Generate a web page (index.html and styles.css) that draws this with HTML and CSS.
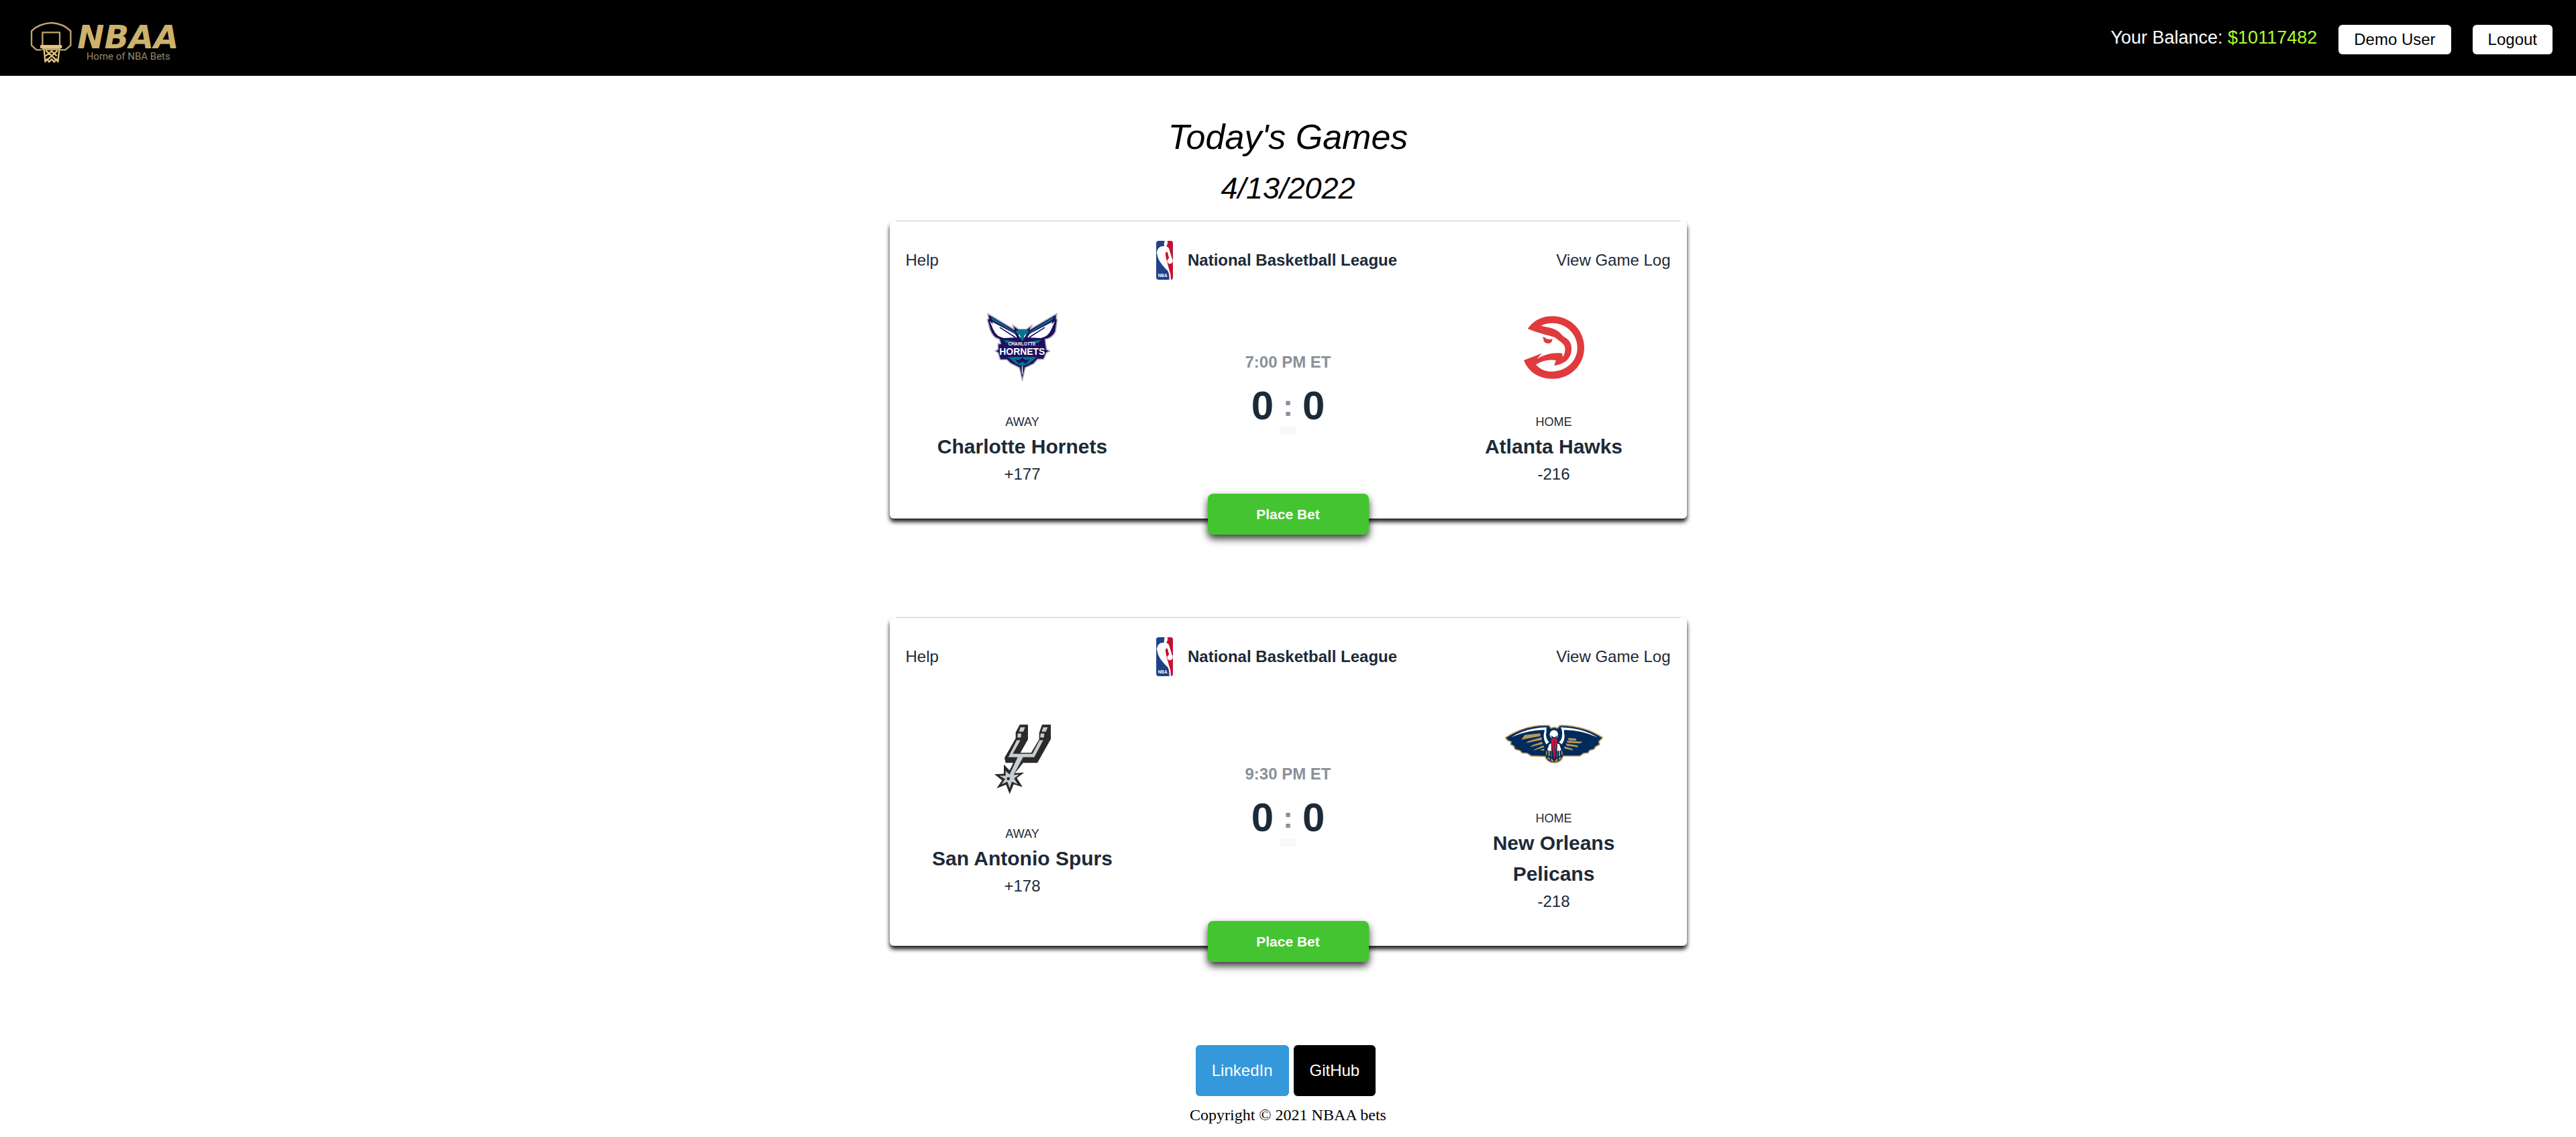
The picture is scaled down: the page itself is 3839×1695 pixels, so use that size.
FILE: index.html
```html
<!DOCTYPE html>
<html lang="en">
<head>
<meta charset="utf-8">
<title>NBAA</title>
<link rel="stylesheet" href="styles.css">
</head>
<body>
<header class="nav">
  <a href="#" class="brand" aria-label="NBAA home">
    <svg class="brand-logo" viewBox="0 0 960 339">
      <g fill="none" stroke="#c0a56b" stroke-width="7" stroke-linejoin="round">
        <path d="M185 223h-22l-22-20v-64q30-32 88-37 56 4 87 37v64l-24 20h-24"/>
        <rect x="190" y="145" width="77" height="60"/>
        <path d="M197 222l5 54 9-12 8 13 12-12 12 12 8-13 8 12 6-54M205 226l46 42M257 226l-46 42M228 226l26 24M234 226l-30 24" stroke="#e2c47f"/>
      </g>
      <rect x="180" y="201" width="97" height="15" rx="4" fill="#e2c47f"/>
      <rect x="188" y="216" width="82" height="9" fill="#c0a56b"/>
      <text x="346" y="217" class="brand-name">NBAA</text>
      <text x="386" y="267" class="brand-tag">Home of NBA Bets</text>
    </svg>
  </a>
  <div class="account">
    <p class="balance">Your Balance: <span class="amount">$10117482</span></p>
    <button class="nav-button" type="button">Demo User</button>
    <button class="nav-button" type="button">Logout</button>
  </div>
</header>

<main class="games">
  <h1 class="title">Today's Games</h1>
  <h2 class="date">4/13/2022</h2>

  <article class="card">
    <div class="card-header">
      <a href="#" class="card-link">Help</a>
      <div class="league">
        <svg class="league-logo" viewBox="70 58 74 173">
          <rect x="70" y="58" width="74" height="173" rx="11" fill="#1d428a"/>
          <path d="M116 58h17q11 0 11 11v151q0 11-11 11h-3l-20-90z" fill="#c8102e"/>
          <path d="M108 58H119Q124 66 118 76L116 84Q127 86 129 100L136 122 139 134Q145 140 143 152 138 162 127 160 118 156 119 144L127 134 120 108Q112 104 111 118L115 140Q122 165 127 184 136 205 135 231H128Q129 205 122 192 90 162 79 136 74 124 75 118L72 114Q74 92 88 84 98 82 106 80 103 70 108 58Z" fill="#fff"/>
          <text x="78" y="219" class="nba-word">NBA</text>
        </svg>
        National Basketball League
      </div>
      <a href="#" class="card-link end">View Game Log</a>
    </div>
    <div class="card-body">
      <section class="team">
        <div class="team-logo">
          <svg width="107" height="103" viewBox="88 75 322 309">
            <path d="M94 79L212 150 206 130 232 149H268L293 130 284 150 404 79 401 102 406 106 398 160Q384 190 352 194L354 214 358 240 373 247 358 254 345 284H318L300 304 262 322 249 380 236 322 196 302 180 286H150L140 254 127 247 140 240V214H152L146 194Q118 190 104 150L92 106 98 102Z" fill="#1d1160" stroke="#b4b3b8" stroke-width="5" stroke-linejoin="round"/>
            <path d="M108 94L210 158 218 168 116 108ZM390 94L288 158 280 168 382 108Z" fill="#00788c"/>
            <path d="M103 113L118 128 114 116 216 170 226 186 166 189Q132 182 118 148ZM395 113L380 128 384 116 282 170 272 186 332 189Q366 182 380 148Z" fill="#fff"/>
            <path d="M148 141l70 45M350 141l-70 45" stroke="#1d1160" stroke-width="5"/>
            <path d="M218 158q32-14 62 0l-18 22-13 24-14-24zM166 197l52 8 6 6H178zM332 197l-52 8-6 6h46zM184 274h130l-36 30-29 12-28-12z" fill="#00788c"/>
            <path d="M214 282l20 6 15-12 16 12 20-6-20 22-16-10-16 10z" fill="#1d1160"/>
            <path d="M234 172l6 14M264 172l-6 14M249 316v34" stroke="#fff" stroke-width="4"/>
            <text x="186" y="223" class="hornets-city">CHARLOTTE</text>
            <text x="146" y="264" class="hornets-word">HORNETS</text>
          </svg>
        </div>
        <p class="side">Away</p>
        <p class="name">Charlotte Hornets</p>
        <p class="odds">+177</p>
      </section>
      <section class="score">
        <p class="time">7:00 PM ET</p>
        <p class="points">0<span class="colon">:</span>0</p>
        <span class="badge"></span>
        <button class="bet" type="button">Place Bet</button>
      </section>
      <section class="team">
        <div class="team-logo">
          <svg width="90" height="94" viewBox="65 66 271 282">
            <path d="M82 123C106 86 148 66 193 66C272 66 336 128 336 207C336 286 274 348 193 348C133 348 84 316 65 264L146 233L123 258C160 236 200 228 237 233L239 249Q250 238 250 214C250 190 228 182 205 162C170 150 120 140 82 123ZM142 110L188 120C222 130 234 150 244 159C268 170 280 190 279 216C277 262 240 284 201 288L209 265C178 258 142 270 119 284C138 306 162 316 194 315C256 312 305 270 305 208C305 146 252 96 192 98Q162 98 142 110Z" fill="#e03a3e" fill-rule="evenodd"/>
            <path d="M145 162q14-6 21 6 12 4 27 1-1 20-20 20-22-2-20-24z" fill="#e03a3e"/>
          </svg>
        </div>
        <p class="side">Home</p>
        <p class="name">Atlanta Hawks</p>
        <p class="odds">-216</p>
      </section>
    </div>
  </article>

  <article class="card">
    <div class="card-header">
      <a href="#" class="card-link">Help</a>
      <div class="league">
        <svg class="league-logo" viewBox="70 58 74 173">
          <rect x="70" y="58" width="74" height="173" rx="11" fill="#1d428a"/>
          <path d="M116 58h17q11 0 11 11v151q0 11-11 11h-3l-20-90z" fill="#c8102e"/>
          <path d="M108 58H119Q124 66 118 76L116 84Q127 86 129 100L136 122 139 134Q145 140 143 152 138 162 127 160 118 156 119 144L127 134 120 108Q112 104 111 118L115 140Q122 165 127 184 136 205 135 231H128Q129 205 122 192 90 162 79 136 74 124 75 118L72 114Q74 92 88 84 98 82 106 80 103 70 108 58Z" fill="#fff"/>
          <text x="78" y="219" class="nba-word">NBA</text>
        </svg>
        National Basketball League
      </div>
      <a href="#" class="card-link end">View Game Log</a>
    </div>
    <div class="card-body">
      <section class="team">
        <div class="team-logo">
          <svg width="84" height="104" viewBox="98 57 252 311">
            <path d="M211 57H248V123L214 183H262L298 123V94L311 57H350V122L290 228H226L190 274 231 272 198 296 224 336 184 324 166 368 150 326 108 342 132 306 98 279 140 277V236L166 262 182 228H148L143 206 193 118V92Z" fill="#2d2926"/>
            <path d="M214 69h21l-8 20h-19zM316 69h20l-8 20h-19zM202 97h16l-2 18h-15zM304 97h17l-2 18h-16zM198 127H214L180 188H268L300 127H316L276 203H226L184 282 208 280 186 298 202 324 176 312 166 342 156 312 130 324 146 300 120 286 148 286V264L166 280 202 203H160Z" fill="#c4ced4"/>
            <circle cx="160" cy="299" r="7" fill="#2d2926"/>
          </svg>
        </div>
        <p class="side">Away</p>
        <p class="name">San Antonio Spurs</p>
        <p class="odds">+178</p>
      </section>
      <section class="score">
        <p class="time">9:30 PM ET</p>
        <p class="points">0<span class="colon">:</span>0</p>
        <span class="badge"></span>
        <button class="bet" type="button">Place Bet</button>
      </section>
      <section class="team">
        <div class="team-logo">
          <svg width="146" height="58" viewBox="65 62 438 172">
            <path d="M67 120Q160 60 262 66L270 78Q285 70 300 78L310 65Q420 66 501 120L484 138 488 150 470 160 462 172 444 176 436 188 416 190 400 202 324 202Q316 232 285 232Q254 232 244 204L182 202 164 190 140 188 132 178 110 172 104 158 90 150 92 138 76 132z" fill="#002b5c" stroke="#b9975b" stroke-width="5" stroke-linejoin="round"/>
            <path d="M92 119Q160 76 250 74Q250 96 248 108Q250 128 262 140L250 150Q236 130 238 106L242 86Q170 84 92 119zM479 119Q410 76 314 74Q322 90 320 108Q320 128 306 140L318 150Q334 130 330 106L328 86Q400 84 479 119z" fill="#fff"/>
            <path d="M152 108l70-7 2 12-86 16zM168 136l60-18 2 12-72 14zM186 154l44-16 4 10-58 14zM202 170l34-15 4 8-50 15zM220 176l20-6v9zM346 122l36 2 2 9-34-1zM340 134l72 4-12 8-56-3zM334 146l54 9 4 8-50-7zM330 159l34 10 6 8-40-9z" fill="#b9975b"/>
            <circle cx="285" cy="190" r="37" fill="#b9975b"/>
            <path d="M252 170q10 24-2 38M318 170q-10 24 2 38M250 200q34 22 72 0M268 156v66M302 156v66" fill="none" stroke="#002b5c" stroke-width="6"/>
            <path d="M262 150l12-6v36l-20-4zM308 150l-12-6v36l20-4z" fill="#fff"/>
            <path d="M270 124h30l-4 90-11 14-11-14z" fill="#002b5c"/>
            <path d="M284 86q17 2 18 20l-3 14q-15-6-30 0l-5-13q2-19 20-21z" fill="#fff"/>
            <path d="M270 112l10 6M299 112l-9 6" stroke="#002b5c" stroke-width="4"/>
            <path d="M270 128l14-8 15 8-6 46-8 44-8-44z" fill="#d31235"/>
            <path d="M285 132v60" stroke="#002b5c" stroke-width="2"/>
          </svg>
        </div>
        <p class="side">Home</p>
        <p class="name">New Orleans Pelicans</p>
        <p class="odds">-218</p>
      </section>
    </div>
  </article>
</main>

<footer class="footer">
  <nav class="social">
    <a href="#" class="social-link linkedin">LinkedIn</a>
    <a href="#" class="social-link github">GitHub</a>
  </nav>
  <p class="copyright">Copyright © 2021 NBAA bets</p>
</footer>
</body>
</html>
```
FILE: styles.css
```css
* { box-sizing: border-box; }

body {
  margin: 0;
  background: #fff;
  color: #000;
  font-family: "Liberation Sans", Arial, sans-serif;
  font-size: 24px;
  line-height: 36px;
}

h1, h2, p { margin: 0; }
a { color: inherit; text-decoration: none; }
button { border: 0; font-family: inherit; cursor: pointer; }

/* Top bar */
.nav {
  display: flex;
  justify-content: space-between;
  align-items: center;
  background: #000;
  color: #fff;
  padding-right: 35px;
}
.brand-logo { display: block; width: 320px; height: 113px; }
.brand-name { font: italic bold 144px "DejaVu Sans", sans-serif; fill: #cdb16d; }
.brand-tag { font: 45px Roboto, sans-serif; fill: #94866a; }
.account { display: flex; align-items: center; gap: 32px; padding-top: 5px; }
.balance { font-size: 27px; padding-bottom: 6px; }
.amount { color: #adff2f; }
.nav-button {
  height: 44px;
  padding: 0 23px;
  border-radius: 6px;
  background: #fff;
  color: #000;
  font-size: 24px;
}

/* Games list */
.games { padding: 59px 24px 0; }
.title, .date { font-style: italic; font-weight: 400; text-align: center; }
.title { font-size: 52px; line-height: 64px; }
.date { margin: 18px 0 22px; font-size: 45px; line-height: 54px; }

.card {
  position: relative;
  max-width: 1188px;
  margin: 0 auto 148px;
  border-radius: 6px;
  background: #fff;
  color: #1c2a38;
  box-shadow: 0 5px 6px rgba(0, 0, 0, .9);
}
.card::before {
  content: "";
  position: absolute;
  top: -1px;
  left: 10px;
  right: 10px;
  height: 1px;
  background: #c8c8c8;
}
.card-header {
  display: grid;
  grid-template-columns: 1fr auto 1fr;
  align-items: center;
  padding: 29px 24px 28px;
}
.card-link.end { text-align: right; }
.league { display: flex; align-items: center; gap: 22px; padding-right: 34px; font-weight: 700; }
.league-logo { width: 25px; height: 58px; }
.nba-word { font: bold 19px "Liberation Sans", Arial, sans-serif; fill: #fff; }

.card-body {
  display: grid;
  grid-template-columns: repeat(3, 1fr);
  align-items: center;
  padding-bottom: 48px;
}
.team { padding: 0 48px; text-align: center; }
.team-logo { display: flex; align-items: center; justify-content: center; height: 145px; margin-bottom: 26px; }
.hornets-city { font: bold 20px "Liberation Sans", Arial, sans-serif; fill: #fff; }
.hornets-word { font: bold 42px "Liberation Sans", Arial, sans-serif; fill: #fff; }
.side { font-size: 18px; line-height: 27px; text-transform: uppercase; }
.name { font-size: 30px; line-height: 46px; font-weight: 700; }

.score { display: flex; flex-direction: column; align-items: center; font-weight: 700; }
.time { margin-bottom: 17px; color: #8a9099; }
.points { display: flex; align-items: center; gap: 14px; font-size: 60px; line-height: 60px; }
.colon { color: #8a9099; font-size: 45px; }
.badge { width: 24px; height: 12px; margin-top: 1px; border-radius: 4px; background: #f8f8f8; }
.bet {
  position: absolute;
  bottom: -24px;
  width: 240px;
  height: 61px;
  border-radius: 8px;
  background: #45c431;
  color: #fff;
  font-size: 21px;
  font-weight: 700;
  box-shadow: 0 6px 12px rgba(0, 0, 0, .8);
}

/* Footer */
.footer { text-align: center; }
.social { display: flex; justify-content: center; gap: 7px; padding-right: 7px; margin-bottom: 10px; }
.social-link { padding: 20px 24px; border-radius: 6px; color: #fff; }
.linkedin { background: #3498db; }
.github { background: #000; }
.copyright { font-family: "Liberation Serif", "Times New Roman", serif; }
```
